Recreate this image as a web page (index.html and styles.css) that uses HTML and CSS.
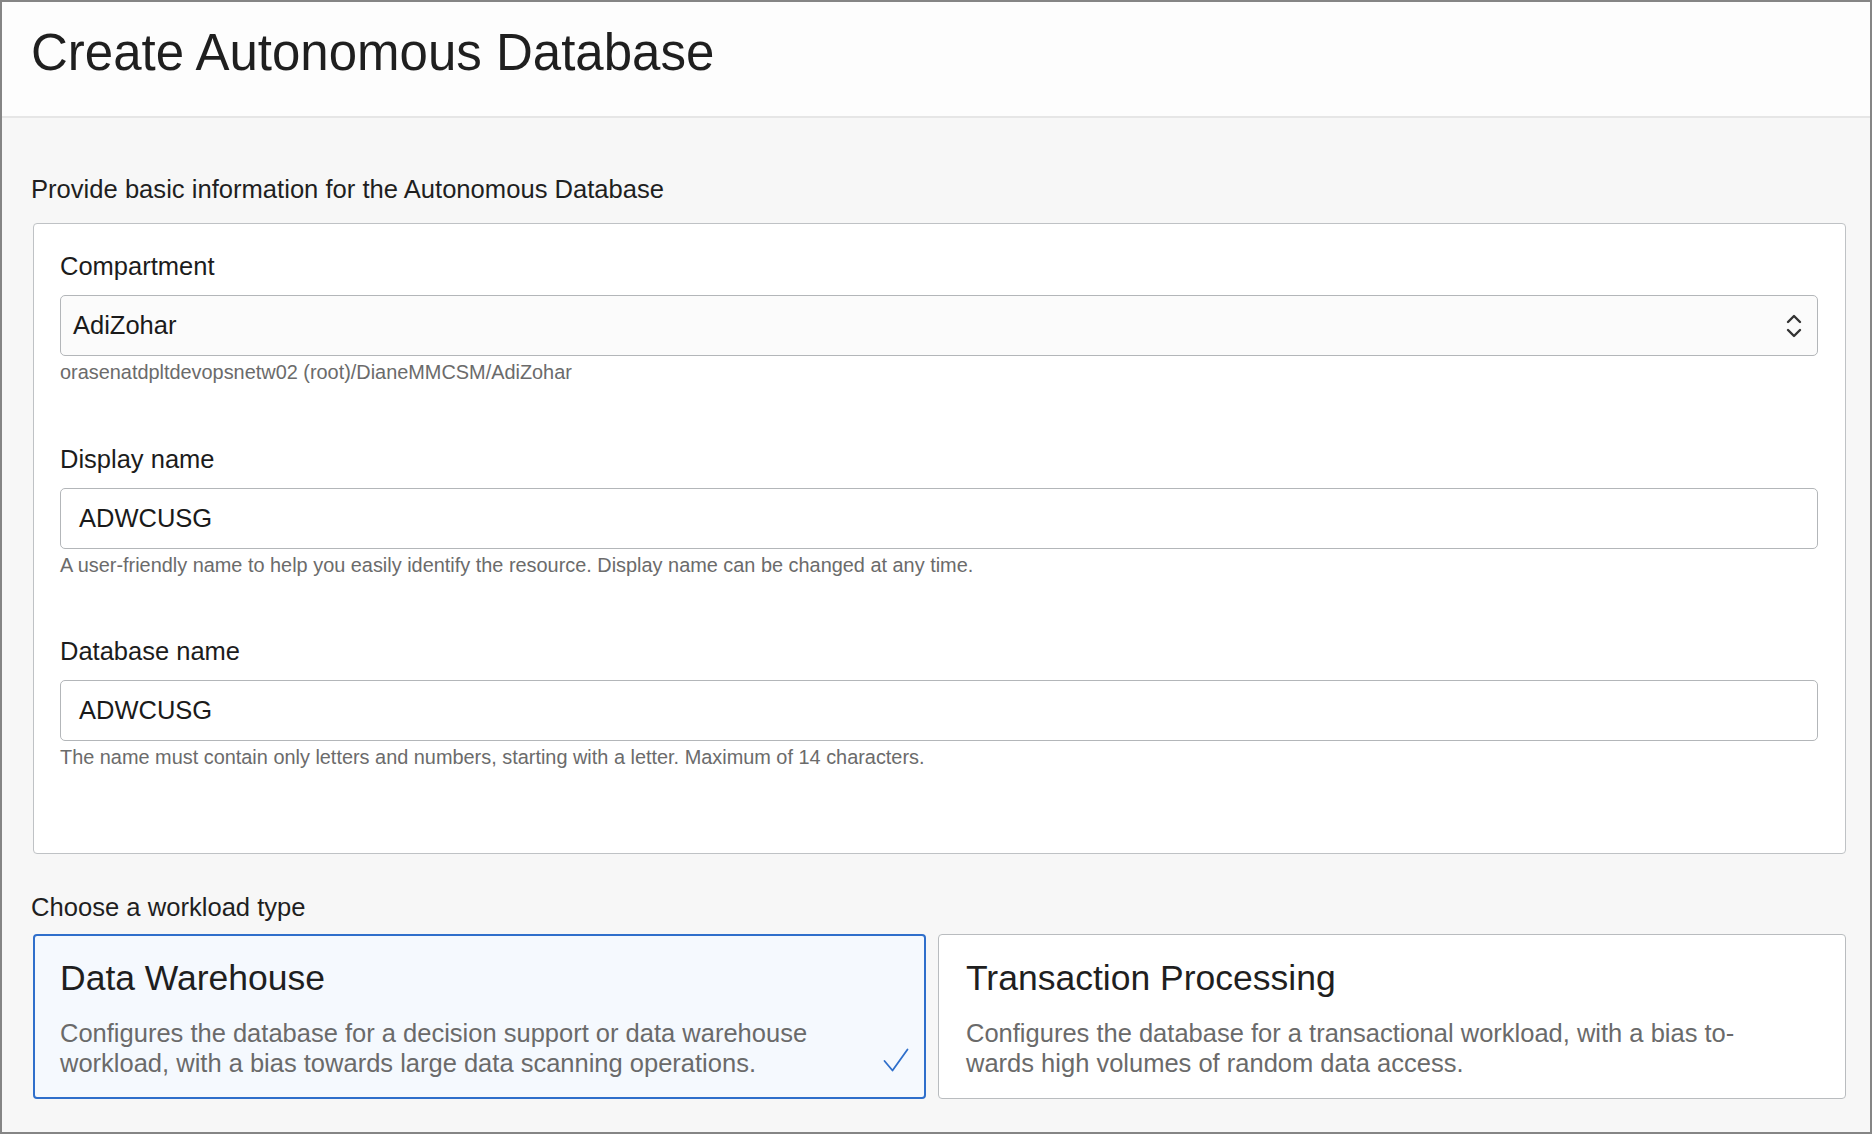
FILE: index.html
```html
<!DOCTYPE html>
<html lang="en">
<head>
<meta charset="utf-8">
<title>Create Autonomous Database</title>
<link rel="stylesheet" href="styles.css">
</head>
<body>
<div class="frame">
  <header class="page-header">
    <h1 class="page-title">Create Autonomous Database</h1>
  </header>
  <main class="page-body">
    <h2 class="section-title">Provide basic information for the Autonomous Database</h2>
    <section class="panel">
      <div class="field">
        <label class="field-label">Compartment</label>
        <div class="select">
          <span class="select-value">AdiZohar</span>
          <svg class="select-icon" width="18" height="28" viewBox="0 0 18 28" aria-hidden="true">
            <polyline points="3,10 9,4 15,10" fill="none" stroke="#333" stroke-width="2.4" stroke-linecap="round" stroke-linejoin="round"/>
            <polyline points="3,18 9,24 15,18" fill="none" stroke="#333" stroke-width="2.4" stroke-linecap="round" stroke-linejoin="round"/>
          </svg>
        </div>
        <div class="field-help">orasenatdpltdevopsnetw02 (root)/DianeMMCSM/AdiZohar</div>
      </div>
      <div class="field">
        <label class="field-label">Display name</label>
        <div class="input">ADWCUSG</div>
        <div class="field-help">A user-friendly name to help you easily identify the resource. Display name can be changed at any time.</div>
      </div>
      <div class="field">
        <label class="field-label">Database name</label>
        <div class="input">ADWCUSG</div>
        <div class="field-help">The name must contain only letters and numbers, starting with a letter. Maximum of 14 characters.</div>
      </div>
    </section>
    <h2 class="section-title workload-title">Choose a workload type</h2>
    <div class="cards">
      <div class="card card-selected">
        <div class="card-title">Data Warehouse</div>
        <div class="card-desc">Configures the database for a decision support or data warehouse workload, with a bias towards large data scanning operations.</div>
        <svg class="card-check" width="26" height="24" viewBox="0 0 26 24" aria-hidden="true">
          <polyline points="1.5,13 9.5,22.5 24.5,1.5" fill="none" stroke="#2f6fcb" stroke-width="1.8" stroke-linecap="round" stroke-linejoin="round"/>
        </svg>
      </div>
      <div class="card">
        <div class="card-title">Transaction Processing</div>
        <div class="card-desc">Configures the database for a transactional workload, with a bias to&#8209;<br>wards high volumes of random data access.</div>
      </div>
    </div>
  </main>
</div>
</body>
</html>
```

FILE: styles.css
```css
* {
  box-sizing: border-box;
}

html, body {
  margin: 0;
  padding: 0;
}

body {
  font-family: "Liberation Sans", Arial, Helvetica, sans-serif;
  color: #1c1c1c;
  background: #f7f7f7;
}

.frame {
  width: 1872px;
  height: 1134px;
  border: 2px solid #858585;
  background: #f7f7f7;
  overflow: hidden;
  display: flex;
  flex-direction: column;
}

.page-header {
  height: 116px;
  flex: none;
  background: #fdfdfd;
  border-bottom: 2px solid #e6e6e6;
  padding: 21px 0 0 29px;
}

.page-title {
  margin: 0;
  font-size: 51px;
  line-height: 60px;
  font-weight: 400;
  color: #1f1f1f;
}

.page-body {
  padding: 56px 24px 0 31px;
}

.section-title {
  margin: 0 0 19px -2px;
  font-size: 25.6px;
  line-height: 30px;
  font-weight: 400;
  color: #1f1f1f;
}

.panel {
  background: #ffffff;
  border: 1px solid #bfc2c5;
  border-radius: 4px;
  padding: 27px 27px 24px 26px;
}

.field {
  margin-bottom: 59.5px;
}

.field-label {
  display: block;
  font-size: 25.5px;
  line-height: 30px;
  color: #1c1c1c;
  margin-bottom: 14px;
}

.select,
.input {
  height: 61px;
  border: 1px solid #b3b6b9;
  border-radius: 5px;
  display: flex;
  align-items: center;
  font-size: 25.5px;
  color: #1a1a1a;
}

.select {
  background: #fbfbfb;
  padding: 0 14px 0 12px;
  justify-content: space-between;
}

.input {
  background: #ffffff;
  padding: 0 18px;
}

.select-icon {
  display: block;
}

.field-help {
  margin-top: 4px;
  font-size: 19.9px;
  line-height: 24px;
  color: #6b6b6b;
}

.workload-title {
  margin-top: 38px;
  margin-bottom: 12px;
}

.cards {
  display: grid;
  grid-template-columns: 893px 1fr;
  gap: 12px;
}

.card {
  position: relative;
  height: 165px;
  background: #ffffff;
  border: 1px solid #b9bcbf;
  border-radius: 4px;
  padding: 22px 28px 0 27px;
}

.card-selected {
  background: #f5f9fe;
  border: 2px solid #2f6fcb;
  padding: 21px 60px 0 25px;
}

.card-title {
  font-size: 35.5px;
  line-height: 42px;
  color: #1f1f1f;
  margin-bottom: 19px;
}

.card-desc {
  font-size: 25.5px;
  line-height: 30px;
  color: #6a6a6a;
}

.card-check {
  position: absolute;
  right: 15px;
  bottom: 25px;
}
```
